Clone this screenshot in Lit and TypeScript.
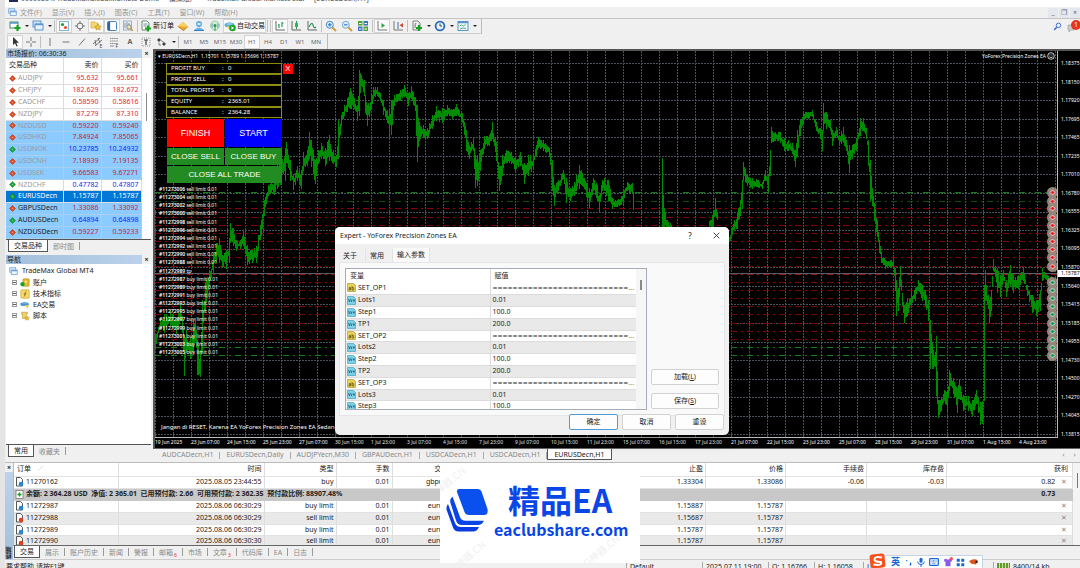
import { LitElement, html, svg, css } from "lit";
import { customElement, property } from "lit/decorators.js";
import { classMap } from "lit/directives/class-map.js";

const fontStack = css`"Noto Sans", "Noto Sans CJK SC", sans-serif`;

/* ---------- icons ---------- */
const ic = (body: unknown, w = 12, h = 12) => html`<svg class="ic" width=${w} height=${h} viewBox="0 0 12 12" aria-hidden="true">${body}</svg>`;
const plus = (x: number, y: number) => svg`<path d="M${x} ${y - 3}v6M${x - 3} ${y}h6" stroke="#14a321" stroke-width="2.2"/>`;
const icons = {
  newChart: svg`<rect x="1" y="2" width="8" height="6" fill="#fff" stroke="#4d8a5c"/><path d="M1 3h8" stroke="#4a8fd0" stroke-width="1.4"/>${plus(8.5, 8)}`,
  profiles: svg`<rect x="1" y="1" width="8" height="6" fill="#cfe4f8" stroke="#5c94cc"/><rect x="3" y="4" width="8" height="6" fill="#e8f2fc" stroke="#5c94cc"/><path d="M3 4.500h8" stroke="#5c94cc" stroke-width="1.5"/>`,
  market: svg`<rect x="1.5" y="1.5" width="9" height="9" fill="#fff" stroke="#7fb6dc"/><circle cx="4.5" cy="4.5" r="1.6" fill="#18a030"/><circle cx="7.5" cy="7.5" r="1.6" fill="#e0502a"/>`,
  target: svg`<circle cx="6" cy="6" r="3" fill="none" stroke="#777"/><path d="M6 1v3M6 8v3M1 6h3M8 6h3" stroke="#777"/>`,
  star: svg`<path d="M1 2h4l1 1h2v5H1z" fill="#f6d974" stroke="#d8a830" stroke-width=".7"/><path d="M8 4l1 2 2.400.3-1.700 1.500.4 2.200L8 9l-2 1 .3-2.200-1.600-1.500L7 6z" fill="#f3c63c" stroke="#b88a18" stroke-width=".6"/>`,
  terminal: svg`<rect x="1.500" y="1.500" width="9" height="9" rx="1" fill="#fff" stroke="#4a7fc0"/><path d="M3 2v8" stroke="#2e62a8" stroke-width="2.200"/>`,
  tester: svg`<rect x="1.500" y="1" width="8" height="9" fill="#e4ecf4" stroke="#8aa4be" stroke-width=".8"/><path d="M3 3v5M5 2v4M7 3v4" stroke="#89a"/><circle cx="7" cy="7" r="2.200" fill="#f7e5a8" stroke="#678" stroke-width=".8"/><path d="M8.600 8.600l2.200 2.200" stroke="#c99a34" stroke-width="1.500"/>`,
  order: svg`<path d="M2 1h5l2 2v7H2z" fill="#fff" stroke="#5d7f6a" stroke-width=".9"/><path d="M3.500 4h4M3.500 6h3" stroke="#789"/>${plus(8, 8.500)}`,
  gold: svg`<path d="M1 6l5-4 5 4.500-4.500 4z" fill="#e9ab25"/><path d="M1 6l5-4 5 4.500-3 .3z" fill="#f8d066"/><path d="M1 6v1l5.500 4 4.500-4V6.500L6.500 10z" fill="#b97d10"/>`,
  person: svg`<circle cx="6" cy="4" r="3" fill="#5fa8e6"/><path d="M1 10q5-5 10 0z" fill="#6cb0ea"/><path d="M1 10.500h10" stroke="#3a7cc0"/><path d="M4.500 3h3v2h-3z" fill="#dcefff"/>`,
  signal: svg`<circle cx="6" cy="5.500" r="4.500" fill="#d8eedd" stroke="#8cbf9b" stroke-width=".8"/><path d="M3.500 3.500q-1.500 2 0 4M8.500 3.500q1.500 2 0 4" fill="none" stroke="#4a90b8"/><circle cx="6" cy="5.500" r="1.500" fill="#2c9a3e"/><path d="M6 6v5" stroke="#2c9a3e"/>`,
  auto: svg`<ellipse cx="5.500" cy="5" rx="5" ry="2.500" fill="#5caede"/><path d="M3 4q2.500-4 5.500 0v1H3z" fill="#8ccbee"/><path d="M3 6h5l-2.500 4z" fill="#f0c649"/><circle cx="8.500" cy="8" r="3.300" fill="#16a52b"/><path d="M7.500 6.300v3.400l2.600-1.700z" fill="#fff"/>`,
  bars: svg`<path d="M2 1v9h9" fill="none" stroke="#666"/><path d="M5 4v4M8 2v5M4 5h1M8 3h1.500" stroke="#24984a" stroke-width="1.100"/>`,
  candles: svg`<path d="M2 1v9h9" fill="none" stroke="#666"/><path d="M6.500 1v8" stroke="#24984a"/><rect x="5" y="3" width="3" height="4" fill="#35b35d"/>`,
  line: svg`<path d="M2 1v9h9" fill="none" stroke="#666"/><path d="M3 7q3-6 4-2t3 2" fill="none" stroke="#24984a" stroke-width="1.100"/>`,
  zoomIn: svg`<circle cx="4.800" cy="4.800" r="3.500" fill="#d6ecfb" stroke="#4a8cc6"/><path d="M3 4.800h3.600M4.800 3v3.600" stroke="#2a6fb5"/><path d="M7.500 7.500l3.500 3.500" stroke="#cf9e34" stroke-width="2"/>`,
  zoomOut: svg`<circle cx="4.800" cy="4.800" r="3.500" fill="#d6ecfb" stroke="#7aa9d0"/><path d="M3 4.800h3.600" stroke="#2a6fb5"/><path d="M7.500 7.500l3.500 3.500" stroke="#cf9e34" stroke-width="2"/>`,
  tiles: svg`<path d="M1 1h4.500v4.500H1zM6.500 6.500H11V11H6.500z" fill="#4da33a"/><path d="M6.500 1H11v4.500H6.500zM1 6.500h4.500V11H1z" fill="#3f74b8"/><path d="M2 3.500h2.500M7.500 3.500H10M2 9h2.500M7.500 9H10" stroke="#fff"/>`,
  scroll: svg`<path d="M2 1v9h9" fill="none" stroke="#777"/><path d="M5.500 3v5l3.500-2.500z" fill="#28a745"/>`,
  shift: svg`<path d="M2 1v9h9" fill="none" stroke="#777"/><path d="M6 2v7" stroke="#3d6fb0"/><path d="M11 3v4.500L7.500 5.200z" fill="#d0472c"/>`,
  indicators: svg`<path d="M2 1h5l2 2v7H2z" fill="#eee" stroke="#777" stroke-width=".9"/><path d="M5 3q-1 0-1 5" fill="none" stroke="#777"/>${plus(8, 8)}`,
  clock: svg`<circle cx="6" cy="6" r="4.400" fill="#eaf4fd" stroke="#2a6cb8" stroke-width="1.800"/><path d="M6 3.500V6h2" fill="none" stroke="#345"/>`,
  template: svg`<rect x="1" y="1.500" width="10" height="9" fill="#eef6fd" stroke="#5b93c8"/><path d="M1 2.500h10" stroke="#5b93c8" stroke-width="1.500"/><path d="M2.500 6l2-1 2 1 2-1.500M3 9l3-1 3 .5" stroke="#3a9a58" fill="none" stroke-width=".8"/>`,
  cursor: svg`<path d="M4 1v8l2-1.800L7.500 10.500l1.200-.6L7.300 6.800H10z" fill="#333"/>`,
  cross: svg`<path d="M6 1v4M6 7v4M1 6h4M7 6h4" stroke="#777"/>`,
  vline: svg`<path d="M6 2v8" stroke="#777"/>`,
  hline: svg`<path d="M2.500 6h7" stroke="#777"/>`,
  slope: svg`<path d="M3 9.500l6-7" stroke="#777"/>`,
  channel: svg`<path d="M1 8l7-6M3 10l7-6M3 4l1 5M6 2l2 5" stroke="#666" stroke-width=".9"/><text x="7.500" y="11.500" font-size="5" fill="#444">E</text>`,
  fibo: svg`<path d="M2 2.500h8M2 5h8M2 7.500h8" stroke="#888" stroke-dasharray="1.500 .6"/><path d="M2 10h4" stroke="#888"/><text x="7.500" y="11.800" font-size="5" fill="#444">F</text>`,
  label: svg`<rect x="2" y="2" width="8" height="8" fill="none" stroke="#999" stroke-dasharray="1 1"/><path d="M4 4h4M6 4v5" stroke="#444" stroke-width="1.200"/>`,
  arrows: svg`<path d="M3 2l2 2-2 2-2-2z" fill="#444"/><path d="M8 6l2 2-2 2-2-2z" fill="#444"/><path d="M5 4.500l3 2M3 6.500v2.500h2" stroke="#666" fill="none" stroke-width=".8"/>`,
  search: svg`<circle cx="7.300" cy="4.500" r="3" fill="none" stroke="#3b6fd4" stroke-width="1.300"/><path d="M5 7L1.500 10.500" stroke="#3b6fd4" stroke-width="2"/>`,
  windows: svg`<rect x="1" y="1" width="8" height="6" fill="#dcecfb" stroke="#6a9fd4"/><rect x="3" y="4" width="8" height="6" fill="#eef6fd" stroke="#6a9fd4"/><path d="M3 5h8" stroke="#6a9fd4" stroke-width="1.500"/>`,
  account: svg`<rect x="3.500" y="1" width="7.500" height="9" rx="1" fill="#e8b92e" stroke="#a87c12" stroke-width=".6"/><path d="M7 3v3M5.500 4.500h3" stroke="#fff3b8"/><circle cx="3" cy="7.500" r="2.600" fill="#18a32c"/>`,
  func: svg`<rect x="1" y="1" width="10" height="10" rx="1" fill="#f6d968" stroke="#c8a02a" stroke-width=".8"/><path d="M7.500 3q-1.500 0-1.500 3t-1.500 3M4.500 6h3" stroke="#7a5c10" fill="none" stroke-width=".9"/>`,
  hat: svg`<ellipse cx="5.500" cy="5" rx="5.200" ry="2.200" fill="#4d97cc"/><path d="M3 4.500q2.500-5 5.500 0z" fill="#6fb3dd"/><path d="M6 6h4.500L9 10.500z" fill="#efc445"/>`,
  script: svg`<path d="M2 1.500h7v2H7.500V9H3V4H2z" fill="#f3d269" stroke="#b8912a" stroke-width=".7"/><path d="M8.500 6l1 1.500 2 .3-1.500 1.300.3 2-1.800-1-1.800 1 .3-2L5.500 7.800l2-.3z" fill="#f1c232" stroke="#a87c12" stroke-width=".4"/>`,
};
const arrowIcon = (up: boolean) => html`<svg class="dot" width="7" height="7" viewBox="0 0 7 7" aria-hidden="true"><path d="M3.500 .6L6.500 3.500 3.500 6.400 .5 3.500z" fill=${up ? "#18a53a" : "#e2491f"} stroke=${up ? "#0c7a26" : "#a8300e"} stroke-width=".5"/><circle cx="3.500" cy="3.500" r=".8" fill="#fff" fill-opacity=".4"/></svg>`;

const shared = css`
  :host { display: block; box-sizing: border-box; font-family: ${fontStack}; font-size: 7px; line-height: 10px; color: #222; }
  * { box-sizing: border-box; }
  button { font: inherit; color: inherit; border: 0; background: none; padding: 0; margin: 0; white-space: nowrap; }
  table { border-collapse: collapse; border-spacing: 0; table-layout: fixed; }
  td, th { padding: 0; font-weight: normal; white-space: nowrap; overflow: hidden; }
  .ic, .dot { display: block; flex: none; }
  .tabs { display: flex; align-items: flex-start; color: #8a8a8a; }
  .tab { padding: 1px 6px 0 5px; height: 12px; position: relative; }
  .tab:not(.on)::after { content: ""; position: absolute; right: 0; top: 2px; width: 1px; height: 8px; background: #999; }
  .tab.on { background: #fff; color: #222; border: 1px solid #555; border-top: 0; padding: 1px 5px 0; }
  .badge { color: #f02020; font-size: 5px; position: relative; top: 2px; margin-left: 1px; }
`;

/* ---------- toolbars ---------- */
@customElement("tool-bars")
export class ToolBars extends LitElement {
  static styles = [shared, css`
    .menu { display: flex; height: 12px; align-items: center; gap: 3px; padding-left: 3px; color: #999; border-bottom: 1px solid #c4c4c4; }
    .menu nav { display: flex; gap: 10px; flex: 1; }
    .win { display: flex; gap: 1px; }
    .win button { width: 10px; height: 10px; background: #e4e8ee; color: #667; line-height: 9px; }
    .row { display: flex; height: 15px; align-items: center; padding-left: 2px; }
    .group { display: flex; align-items: center; height: 15px; border-bottom: 1px solid #ccc; border-right: 1px solid #bbb; padding-right: 3px; }
    .second .group { border-bottom: 0; }
    .b { width: 16px; height: 14px; display: flex; align-items: center; justify-content: center; }
    .b.on { background: #fafafa; outline: 1px solid #d4d4d4; outline-offset: -1px; }
    .b.wide { width: auto; gap: 1px; padding: 0 1px; color: #111; }
    .caret { width: 7px; }
    .caret::before { content: ""; display: block; margin: 0 auto; width: 0; border: 2px solid transparent; border-top-color: #222; border-bottom: 0; }
    .sep { width: 1px; height: 12px; background: #c0c0c0; margin: 0 1px; }
    .tf { font-size: 6px; color: #666; }
    .letter { font-weight: bold; color: #666; }
    .fill { flex: 1; }
    .alert { position: relative; width: 13px; margin-left: 5px; height: 14px; }
    .alert b { position: absolute; right: -1px; top: 0; width: 10px; height: 10px; border-radius: 5px; background: #e8341c; color: #fff; font-weight: normal; text-align: center; line-height: 9px; }
  `];
  b(name: keyof typeof icons, on = false) {
    return html`<button class=${classMap({ b: true, on })} aria-label=${name}>${ic(icons[name])}</button>`;
  }
  render() {
    const caret = html`<span class="caret"></span>`;
    const sep = html`<span class="sep"></span>`;
    return html`
      <div class="menu">${ic(icons.windows, 9, 9)}
        <nav>${["文件(F)", "显示(V)", "插入(I)", "图表(C)", "工具(T)", "窗口(W)", "帮助(H)"].map((m) => html`<button>${m}</button>`)}</nav>
        <div class="win"><button>_</button><button>❐</button><button>×</button></div>
      </div>
      <div class="row">
        <div class="group">
          ${this.b("newChart")}${caret}${this.b("profiles")}${caret}${sep}
          ${this.b("market", true)}${this.b("target")}${this.b("star", true)}${this.b("terminal", true)}${this.b("tester")}${sep}
          <button class="b wide">${ic(icons.order)}新订单</button>
          ${this.b("gold")}${this.b("person")}${this.b("signal")}
          <button class="b wide on">${ic(icons.auto)}自动交易</button>
          ${sep}${sep}${this.b("bars", true)}${this.b("candles")}${this.b("line")}${sep}
          ${this.b("zoomIn")}${this.b("zoomOut")}${this.b("tiles")}${sep}${this.b("scroll", true)}${this.b("shift")}${sep}
          ${this.b("indicators")}${caret}${this.b("clock")}${caret}${this.b("template")}${caret}
        </div>
        <span class="fill"></span>
        ${ic(icons.search, 9, 9)}
        <div class="alert">${ic(svg`<path d="M1 5h6v5H4l-2 2v-2H1z" fill="#ccc" stroke="#999" stroke-width=".6"/>`)}<b>1</b></div>
      </div>
      <div class="row second">
        <div class="group">
          ${this.b("cursor", true)}${this.b("cross")}${sep}
          ${this.b("vline")}${this.b("hline")}${this.b("slope")}${this.b("channel")}${this.b("fibo")}
          <button class="b letter">A</button>${this.b("label")}${this.b("arrows")}${caret}${sep}
          ${["M1", "M5", "M15", "M30", "H1", "H4", "D1", "W1", "MN"].map((t) => html`<button class=${classMap({ b: true, tf: true, on: t === "H1" })}>${t}</button>`)}
        </div>
      </div>`;
  }
}

/* ---------- left column ---------- */
type Quote = [string, string, string, boolean, string];
const quotes: Quote[] = [
  ["AUDJPY", "95.632", "95.661", false, "r"],
  ["CHFJPY", "182.629", "182.672", false, "r"],
  ["CADCHF", "0.58590", "0.58616", false, "r"],
  ["NZDJPY", "87.279", "87.310", false, "r"],
  ["NZDUSD", "0.59220", "0.59240", false, "r hi"],
  ["USDHKD", "7.84924", "7.85065", false, "r hi"],
  ["USDNOK", "10.23785", "10.24932", true, "u hi"],
  ["USDCNH", "7.18939", "7.19135", false, "r hi"],
  ["USDSEK", "9.66583", "9.67271", false, "r hi"],
  ["NZDCHF", "0.47782", "0.47807", true, "u"],
  ["EURUSDecn", "1.15787", "1.15787", true, "sel"],
  ["GBPUSDecn", "1.33086", "1.33092", false, "r hi own"],
  ["AUDUSDecn", "0.64894", "0.64898", true, "u hi own"],
  ["NZDUSDecn", "0.59227", "0.59233", false, "r hi own"],
];

@customElement("side-panels")
export class SidePanels extends LitElement {
  static styles = [shared, css`
    :host { display: flex; flex-direction: column; width: 145px; }
    .head { display: flex; align-items: center; height: 9px; background: linear-gradient(90deg, #a3bfdb, #bcd3ec); line-height: 9px; flex: none; }
    .head h2 { margin: 0; font: inherit; flex: 1; padding-left: 1px; }
    .head button { width: 9px; height: 9px; background: #f0f0f0; font-weight: bold; line-height: 8px; }
    .body { display: flex; background: #fff; height: 181px; overflow: hidden; }
    table { width: 135px; flex: none; }
    tr { height: 12px; }
    tbody tr:nth-child(5n) { height: 11px; }
    thead tr { height: 14px; }
    td, th { text-align: right; border-bottom: 1px solid #dcdcdc; border-right: 1px solid #dcdcdc; padding-right: 2px; line-height: 10px; }
    td:first-child, th:first-child { text-align: left; padding-left: 3px; }
    .sym { display: flex; align-items: center; gap: 2px; color: #9a9a9a; }
    .r { color: #f02030; }
    .u { color: #1a1aff; }
    .hi { background: #8ccbff; }
    .hi td { border-color: #a8cfee; }
    .hi.r { color: #c8203c; }
    .own .sym { color: #222; }
    .sel, .sel .sym { background: #0078d7; color: #fff; }
    .thumb { width: 1px; height: 28px; background: #888; margin: 35px 0 0 4px; }
    .strip { height: 16px; border-top: 1px solid #555; padding-left: 2px; flex: none; }
    .tree { flex: 1; background: #fff; margin: 0; padding: 1px 0 0 3px; list-style: none; }
    .tree li { display: flex; align-items: center; gap: 3px; height: 11px; padding-left: 2px; }
    .tree li.top { padding: 0; gap: 4px; height: 12px; }
    .exp { width: 5px; height: 5px; border: 1px solid #999; background: linear-gradient(#567, #567) center/3px 1px no-repeat; margin-left: 1px; }
    .low { height: 14px; }
  `];
  render() {
    return html`
      <div class="head"><h2>市场报价: 06:30:36</h2><button aria-label="close">×</button></div>
      <div class="body">
        <table>
          <colgroup><col width="57"><col width="38"><col width="40"></colgroup>
          <thead><tr><th>交易品种</th><th>卖价</th><th>买价</th></tr></thead>
          <tbody>${quotes.map(([s, bid, ask, up, cls]) => html`<tr class=${cls}><td><div class="sym">${arrowIcon(up)}${s}</div></td><td>${bid}</td><td>${ask}</td></tr>`)}</tbody>
        </table>
        <div class="thumb"></div>
      </div>
      <div class="strip tabs"><button class="tab on">交易品种</button><button class="tab">即时图</button></div>
      <div class="head"><h2>导航</h2><button aria-label="close">×</button></div>
      <ul class="tree">
        <li class="top">${ic(icons.windows, 9, 9)}TradeMax Global MT4</li>
        ${([["account", "账户"], ["func", "技术指标"], ["hat", "EA交易"], ["script", "脚本"]] as const).map(([i, t]) => html`<li><span class="exp"></span>${ic(icons[i], 10, 10)}${t}</li>`)}
      </ul>
      <div class="strip low tabs"><button class="tab on">常用</button><button class="tab">收藏夹</button></div>`;
  }
}

/* ---------- chart ---------- */
/* price envelope: x, high edge, low edge */
const env: number[][][] = [
  [[155,335,349],[160,320,326],[164,314,332],[170,310,325],[176,318,333],[180,303,320],[182,316,332],[184,335,375],[186,330,352],[190,338,358],[193,322,352],[195,318,340],[197,340,374],[200,350,376],[202,300,352],[205,282,310],[209,271,284],[213,256,272],[216,243,262],[219,238,262],[222,255,266],[226,250,268],[229,238,262],[230,223,242],[233,228,245],[236,240,250],[240,240,248],[243,230,245],[247,245,264],[252,250,262],[256,246,262],[258,235,250],[261,220,235],[264,200,215],[268,185,195],[271,183,192],[274,183,194],[277,160,188],[281,160,183],[285,148,180],[286,142,162],[290,160,180],[293,175,189],[297,166,180],[301,170,188],[303,152,170],[307,150,165],[309,132,158],[311,140,166],[315,160,183],[318,150,163],[321,143,158],[325,148,165],[329,135,160],[333,150,163],[336,155,166],[338,120,158],[341,115,125],[344,105,115],[350,88,108],[354,98,108],[357,105,120],[359,70,115],[361,75,85],[364,80,95],[365,95,112],[367,105,125],[371,95,108],[373,87,98],[377,87,95],[380,93,100],[383,100,114],[387,110,122],[389,108,136],[391,100,134],[394,95,105],[400,90,100],[404,85,96],[408,93,105],[411,86,98],[415,97,110],[416,105,135],[417,105,161],[419,122,140],[423,125,137],[427,128,138],[432,115,128],[436,106,120],[442,108,122],[447,105,115],[452,110,118],[456,104,115],[462,113,122],[466,130,150],[469,145,158],[473,138,150],[475,155,187],[477,155,185],[480,150,170],[484,136,148],[489,135,145],[492,122,138],[496,142,160],[499,166,190],[502,155,175],[506,150,162],[511,152,163],[515,158,172],[520,152,165],[524,163,183],[528,155,175],[533,155,168],[536,145,155],[538,137,147],[543,140,150],[549,148,155],[552,160,190],[554,185,205],[558,180,190],[563,170,178],[566,178,202],[570,188,200],[574,182,195],[579,165,188],[584,178,188],[587,185,200],[589,188,207],[593,178,190],[597,185,200],[599,195,212],[602,180,190],[604,178,190],[608,180,200],[612,198,208],[617,200,206],[623,190,203],[627,182,190],[632,183,193],[634,200,228]],
  [[662,158,228],[663,195,228],[664,208,228],[668,222,228],[672,223,228]],
  [[709,221,228],[713,212,228],[715,198,215],[718,215,228]],
  [[728,238,246],[731,230,238],[734,220,230],[737,212,228],[740,200,215],[742,180,208],[743,162,180],[747,175,185],[752,178,188],[758,180,187],[762,182,188],[765,170,180],[768,175,192],[770,150,175],[771,127,142],[775,132,140],[780,132,142],[784,138,150],[788,140,150],[792,143,153],[795,150,166],[797,130,155],[800,120,135],[803,112,122],[808,112,118],[812,110,116],[816,122,130],[820,128,138],[822,130,150],[823,103,130],[826,112,128],[830,120,130],[832,130,145],[836,127,135],[839,135,145],[843,127,142],[846,140,150],[849,145,172],[852,145,158],[856,138,150],[860,118,135],[863,118,130],[866,128,138],[868,140,165],[870,160,200],[872,188,205],[874,203,220],[877,220,236],[879,240,252],[881,252,262],[885,260,268],[890,260,267],[893,258,268],[895,268,290],[896,280,315],[898,288,310],[900,266,285],[902,293,305],[904,305,322],[907,298,315],[911,293,305],[915,288,300],[918,280,290],[922,285,300],[925,290,305],[928,300,320],[930,320,368],[933,350,368],[935,352,366],[936,336,395],[938,400,417],[941,398,410],[944,390,400],[947,392,412],[949,370,390],[953,378,393],[957,388,412],[959,380,398],[963,395,410],[968,396,410],[972,400,415],[976,390,403],[980,402,424],[983,398,426]],
  [[984,285,400],[985,270,300],[986,285,300],[989,300,322],[991,290,310],[993,259,270],[997,268,292],[1000,275,296],[1003,270,280],[1006,280,296],[1010,265,285],[1013,275,292],[1018,275,288],[1023,268,280],[1027,285,295],[1032,295,312],[1036,300,315],[1040,290,310],[1042,268,280],[1047,275,282],[1052,275,288]],
];
function bars(): string {
  let d = "";
  let s = 7;
  const rnd = () => ((s = (s * 16807) % 2147483647) / 2147483647);
  for (const seg of env) {
    for (let i = 0; i < seg.length - 1; i++) {
      const [x0, h0, l0] = seg[i];
      const [x1, h1, l1] = seg[i + 1];
      for (let x = x0; x < x1; x++) {
        const t = (x - x0) / (x1 - x0);
        const h = h0 + (h1 - h0) * t;
        const l = l0 + (l1 - l0) * t;
        const k = x === x0 ? 0 : (l - h) * 0.42;
        d += `M${x + 0.5} ${Math.round(h + rnd() * k)}V${Math.round(l - rnd() * k) + 1}`;
      }
    }
  }
  return d;
}
const barPath = bars();
const orders = ["#11273006 sell limit 0.01", "#11273004 sell limit 0.01", "#11273002 sell limit 0.01", "#11273000 sell limit 0.01", "#11272998 sell limit 0.01", "#11272996 sell limit 0.01", "#11272994 sell limit 0.01", "#11272992 sell limit 0.01", "#11272990 sell limit 0.01", "#11272988 sell limit 0.01", "#11272989 tp", "#11272987 buy limit 0.01", "#11272989 buy limit 0.01", "#11272991 buy limit 0.01", "#11272993 buy limit 0.01", "#11272995 buy limit 0.01", "#11272997 buy limit 0.01", "#11272999 buy limit 0.01", "#11273001 buy limit 0.01", "#11273003 buy limit 0.01", "#11273005 buy limit 0.01"];
const prices = ["1.18375", "1.18150", "1.17920", "1.17695", "1.17465", "1.17235", "1.17010", "1.16780", "1.16555", "1.16325", "1.16095", "1.15870", "1.15640", "1.15415", "1.15185", "1.14955", "1.14730", "1.14500", "1.14270", "1.14045", "1.13815"];
const times = ["19 Jun 2025", "23 Jun 07:00", "24 Jun 15:00", "25 Jun 23:00", "27 Jun 07:00", "30 Jun 15:00", "1 Jul 23:00", "3 Jul 07:00", "4 Jul 15:00", "7 Jul 23:00", "9 Jul 07:00", "10 Jul 15:00", "11 Jul 23:00", "15 Jul 07:00", "16 Jul 15:00", "17 Jul 23:00", "21 Jul 07:00", "22 Jul 15:00", "23 Jul 23:00", "25 Jul 07:00", "28 Jul 15:00", "29 Jul 23:00", "31 Jul 07:00", "1 Aug 15:00", "4 Aug 23:00"];
const levels = [192, 201, 208, 217, 225, 233, 241, 249, 257, 266, 274, 282, 290, 298, 306, 314, 323, 331, 339, 347, 355];
const levelColor = (i: number) => {
  if (i === 10) return "#a01010";
  if (i === 1) return "#0a500a";
  if (i === 0 || i > 18) return "#128212";
  return "#8c0000";
};

@customElement("price-chart")
export class PriceChart extends LitElement {
  static styles = [shared, css`
    :host { position: relative; background: #000; color: #fff; display: flex; flex-direction: column; border: 2px solid #555; border-right: 0; border-bottom: 1px solid #666; font-size: 5px; line-height: 6px; }
    .main { display: flex; flex: 1; min-height: 0; }
    .plot { position: relative; flex: 1; border-right: 1px solid #bbb; border-bottom: 1px solid #bbb; overflow: hidden; }
    .plot svg.c { display: block; width: 100%; height: 100%; }
    .axis { width: 22px; padding: 9px 0 0 3px; display: flex; flex-direction: column; justify-content: space-between; height: 386px; position: relative; }
    .now { position: absolute; left: 0; right: 0; top: 219px; background: #fff; color: #000; padding-left: 3px; height: 7px; line-height: 7px; }
    .time { display: flex; height: 10px; overflow: hidden; line-height: 9px; }
    .time span { width: 36px; flex: none; white-space: nowrap; }
    .title { position: absolute; left: 3px; top: 2px; white-space: pre; }
    .ea { position: absolute; right: 2px; top: 1px; display: flex; align-items: center; gap: 1px; }
    .note { position: absolute; left: 6px; bottom: 6px; font-size: 6px; line-height: 8px; white-space: nowrap; }
    .panel { position: absolute; left: 11px; top: 12px; width: 116px; font-size: 6px; line-height: 9px; }
    .stats { margin: 0; padding-bottom: 1px; }
    .stat { display: grid; grid-template-columns: 51px 6px 1fr; border: 1px solid #8c8c14; padding-left: 4px; height: 11px; background: #000; }
    .stat dt, .stat dd { margin: 0; }
    .btns { display: grid; grid-template-columns: 1fr 1fr; gap: 1px; font: 8px/16px "Liberation Sans", sans-serif; color: #fff; padding-left: 1px; }
    .btns button { background: #228b22; height: 17px; }
    .btns .big { height: 28px; font-size: 9px; background: #f00; }
    .btns .blue { background: #00f; }
    .btns .all { grid-column: span 2; }
    .x { position: absolute; left: 117px; top: 1px; width: 10px; height: 10px; background: #f00; color: #fff; font: 8px/10px "Liberation Sans", sans-serif; }
  `];
  render() {
    const grid = Array.from({ length: 21 }, (_, i) => Math.round(63 + i * 18.57));
    return html`
      <div class="main">
        <div class="plot">
          <svg class="c" role="img" aria-label="EURUSDecn H1">
            <g transform="translate(-155 -51)" shape-rendering="crispEdges">
              <g stroke="#4a535d" stroke-dasharray="2 1">
                ${Array.from({ length: 70 }, (_, i) => svg`<path d=${`M${155.5 + i * 18} 51V437`}/>`)}
                ${grid.map((y) => svg`<path d=${`M155 ${y + 0.5}H2400`}/>`)}
              </g>
              <path d="M155 273.500H2400" stroke="#56606a"/>
              ${levels.map((y, i) => svg`<path d=${`M155 ${y + 0.5}H2400`} stroke=${levelColor(i)} stroke-dasharray="6 4 2 4"/>`)}
              <path d=${barPath} stroke="#008c00"/>
            </g>
            <g transform="translate(-155 -51)">
              ${levels.filter((_, i) => i !== 10).map((y, i) => svg`<circle cx="1052.500" cy=${y + 0.5} r="5.500" fill="#96877c"/><path d=${`M1047 ${y + 0.5}h11`} stroke="#6a6ad0" stroke-width=".6"/><path d=${`M1052.500 ${y - 2}l2.500 2.500-2.500 2.500-2.500-2.500z`} fill=${i < 10 ? "#e22" : "#1a9a50"} stroke="#fff" stroke-width=".7"/>`)}
              <g fill="#fff" font-size="5">${orders.map((o, i) => svg`<text x="159" y=${Math.round(191 + i * 8.15)}><tspan font-weight="600">${o.slice(0, 9)}</tspan>${o.slice(9)}</text>`)}</g>
            </g>
          </svg>
          <div class="title">▾ EURUSDecn,H1  1.15701 1.15789 1.15696 1.15787</div>
          <div class="ea">YoForex Precision Zones EA <svg width="8" height="8" viewBox="0 0 8 8"><circle cx="4" cy="4" r="3.300" fill="none" stroke="#fff" stroke-width=".8"/><path d="M2.500 3h1M4.500 3h1M2.300 4.800q1.700 1.600 3.400 0" stroke="#fff" stroke-width=".8" fill="none"/></svg></div>
          <div class="note">Jangan di RESET, Karena EA YoForex Precision Zones EA Sedang</div>
          <div class="panel">
            <dl class="stats">${[["PROFIT BUY", "0"], ["PROFIT SELL", "0"], ["TOTAL PROFITS", "0"], ["EQUITY", "2365.01"], ["BALANCE", "2364.28"]].map(([k, v]) => html`<div class="stat"><dt>${k}</dt><span>:</span><dd>${v}</dd></div>`)}</dl>
            <div class="btns">
              <button class="big">FINISH</button><button class="big blue">START</button>
              <button>CLOSE SELL</button><button>CLOSE BUY</button>
              <button class="all">CLOSE ALL TRADE</button>
            </div>
            <button class="x">X</button>
          </div>
        </div>
        <div class="axis">${prices.map((p) => html`<span>${p}</span>`)}<div class="now">1.15787</div></div>
      </div>
      <div class="time">${times.map((t) => html`<span>${t}</span>`)}</div>`;
  }
}

/* ---------- dialog ---------- */
@customElement("expert-dialog")
export class ExpertDialog extends LitElement {
  static styles = [shared, css`
    :host { display: flex; flex-direction: column; background: #f0f0f0; border-radius: 5px; overflow: hidden; box-shadow: 0 4px 14px rgba(0, 0, 0, .35); }
    header { display: flex; align-items: center; height: 17px; background: #fff; padding: 0 8px 0 5px; flex: none; }
    h1 { font: inherit; margin: 0; flex: 1; }
    header button { width: 10px; margin-left: 16px; font-size: 8px; display: flex; justify-content: center; }
    .dtabs { display: flex; align-items: flex-end; padding: 4px 0 0 4px; height: 18px; flex: none; }
    .dtab { height: 13px; padding: 0 8px 0 4px; border-right: 1px solid #e2e2e2; }
    .dtab.on { height: 14px; background: #f9f9f9; padding: 0 4px; }
    .pane { margin: 0 4px; border: 1px solid #e6e6e6; background: #f9f9f9; display: flex; height: 154px; padding: 5px; justify-content: space-between; flex: none; }
    .list { display: flex; border: 1px solid #a5acb5; background: #fff; width: 302px; overflow: hidden; }
    table { width: 290px; flex: none; }
    tr { height: 12px; }
    tbody tr:nth-child(5n) { height: 11px; }
    tbody tr:nth-child(even) { background: #e9e9e9; }
    thead tr { height: 13px; }
    td, th { text-align: left; border-bottom: 1px solid #dcdcdc; padding-left: 2px; }
    th { padding-left: 4px; border-bottom: 0; }
    td:first-child, th:first-child { border-right: 1px solid #dcdcdc; }
    td:last-child { text-overflow: ellipsis; }
    td:first-child { padding-left: 1px; }
    .rule { font: 6px/10px "DejaVu Sans", sans-serif; }
    .nm { display: flex; align-items: center; gap: 2px; }
    .bar { flex: 1; background: #f6f6f6; }
    .bar::before { content: ""; display: block; width: 2px; height: 10px; background: #8a8a8a; margin: 11px 0 0 4px; }
    .side { display: flex; flex-direction: column; justify-content: flex-end; gap: 8px; padding-bottom: 1px; }
    .btn { width: 49px; height: 16px; background: #fdfdfd; border: 1px solid #d2d2d2; border-radius: 2px; }
    .side .btn { width: 68px; }
    .btn.def { border-color: #4f9bd8; }
    footer { display: flex; justify-content: flex-end; gap: 4px; padding-right: 5px; margin-top: -2px; position: relative; }
    u { text-decoration-thickness: 1px; }
  `];
  render() {
    const eq = "=".repeat(40);
    const rows: [string, string][] = [["SET_OP1", eq], ["Lots1", "0.01"], ["Step1", "100.0"], ["TP1", "200.0"], ["SET_OP2", eq], ["Lots2", "0.01"], ["Step2", "100.0"], ["TP2", "200.0"], ["SET_OP3", eq], ["Lots3", "0.01"], ["Step3", "100.0"]];
    const kind = (text: boolean) => html`<svg class="ic" width="9" height="9" viewBox="0 0 9 9" aria-hidden="true"><path d="M.5.5h6l2 2v6h-8z" fill=${text ? "#e6d15c" : "#7fd0e6"} stroke=${text ? "#b09a28" : "#3aa3c0"} stroke-width=".7"/>${text
      ? svg`<path d="M2 4.500h1.500v2.500H2V5.700h1.500M5 3v4h1.700V4.700H5" fill="none" stroke="#5c4c08" stroke-width=".7"/>`
      : svg`<path d="M1.500 3l1 3 1-3M4.500 6V4l1 0M7 3v3M6 4.500h1.500" fill="none" stroke="#0c5c78" stroke-width=".7"/>`}</svg>`;
    return html`
      <header><h1>Expert - YoForex Precision Zones EA</h1><button aria-label="help">?</button><button aria-label="close"><svg width="7" height="7" viewBox="0 0 7 7"><path d="M.7.7l5.600 5.600M6.300.7L.7 6.300" stroke="#333" stroke-width=".9"/></svg></button></header>
      <div class="dtabs"><button class="dtab">关于</button><button class="dtab">常用</button><button class="dtab on">输入参数</button></div>
      <div class="pane">
        <div class="list">
          <table>
            <colgroup><col width="144"><col></colgroup>
            <thead><tr><th>变量</th><th>赋值</th></tr></thead>
            <tbody>${rows.map(([k, v]) => html`<tr><td><div class="nm">${kind(k.startsWith("SET"))}${k}</div></td><td class=${v === eq ? "rule" : ""}>${v}</td></tr>`)}</tbody>
          </table>
          <div class="bar"></div>
        </div>
        <div class="side"><button class="btn">加载(<u>L</u>)</button><button class="btn">保存(<u>S</u>)</button></div>
      </div>
      <footer><button class="btn def">确定</button><button class="btn">取消</button><button class="btn">重设</button></footer>`;
  }
}

/* ---------- terminal ---------- */
@customElement("order-terminal")
export class OrderTerminal extends LitElement {
  static styles = [shared, css`
    :host { display: flex; }
    .edge { width: 8px; display: flex; flex-direction: column; flex: none; }
    .edge button { height: 9px; font-weight: bold; line-height: 8px; }
    .edge h2 { margin: 0; flex: 1; font: inherit; font-size: 6px; line-height: 8px; background: linear-gradient(#a3bfdb, #bcd3ec); writing-mode: vertical-rl; transform: rotate(180deg); font-weight: bold; }
    .col { flex: 1; min-width: 0; }
    .grid { height: 83px; overflow: hidden; background: #fff; display: flex; border-bottom: 1px solid #666; border-left: 1px solid #bbb; }
    table { flex: 1; }
    tr { height: 12px; }
    tbody tr:nth-child(5n) { height: 11px; }
    thead tr { height: 13px; }
    td, th { text-align: right; border-right: 1px solid #dedede; border-bottom: 1px solid #e2e2e2; padding-right: 2px; }
    td:first-child, th:first-child { text-align: left; padding-left: 1px; }
    th:first-child { padding-left: 3px; }
    .odd { background: #e9e9e9; }
    .total td { background: #c8c8c8; font-weight: bold; border-color: #c8c8c8; }
    .id { display: flex; align-items: center; gap: 2px; white-space: pre; }
    .x { color: #888; display: inline-block; width: 13px; text-align: center; }
    th:last-child { padding-right: 4px; }
    .sort { color: #999; margin-left: 6px; font-size: 6px; }
    .rail { width: 7px; background: #f4f4f4; }
    .rail::before { content: ""; display: block; width: 1px; height: 15px; background: #777; margin: 10px 0 0 4px; }
    .tabs { padding-left: 1px; }
  `];
  doc(color: string) {
    return html`<svg class="ic" width="9" height="10" viewBox="0 0 9 10" aria-hidden="true"><path d="M1.500.5h4l2 2v6.500h-6z" fill="#fff" stroke="#444" stroke-width=".9"/><circle cx="6" cy="7" r="2.300" fill=${color}/></svg>`;
  }
  render() {
    const rows: [string, string, string, string, string][] = [
      ["11272987", "2025.08.06 06:30:29", "buy limit", "1.15887", "1.15787"],
      ["11272988", "2025.08.06 06:30:29", "sell limit", "1.15687", "1.15787"],
      ["11272989", "2025.08.06 06:30:29", "buy limit", "1.15787", "1.15787"],
      ["11272990", "2025.08.06 06:30:30", "sell limit", "1.15787", "1.15787"],
    ];
    const x = html`<span class="x">✕</span>`;
    return html`
      <div class="edge"><button aria-label="close">×</button><h2>终端</h2></div>
      <div class="col">
        <div class="grid">
          <table>
            <colgroup><col width="104"><col width="146"><col width="72"><col width="56"><col width="73"><col><col width="80"><col width="80"><col width="81"><col width="80"><col width="126"></colgroup>
            <thead><tr><th>订单<span class="sort">∕</span></th><th>时间</th><th>类型</th><th>手数</th><th>交易品种</th><th></th><th>止盈</th><th>价格</th><th>手续费</th><th>库存费</th><th>获利</th></tr></thead>
            <tbody>
              <tr><td><div class="id">${this.doc("#2a86d8")}11270162</div></td><td>2025.08.05 23:44:55</td><td>buy</td><td>0.01</td><td>gbpusdecn</td><td></td><td>1.33304</td><td>1.33086</td><td>-0.06</td><td>-0.03</td><td>0.82 ${x}</td></tr>
              <tr class="total"><td colspan="10"><div class="id"><svg class="ic" width="9" height="9" viewBox="0 0 9 9"><rect x="1" y=".5" width="7" height="8" fill="#fff" stroke="#777" stroke-width=".8"/><path d="M4.500 2.500v4M2.500 4.500h4" stroke="#14a321" stroke-width="1.600"/></svg>余额: 2 364.28 USD  净值: 2 365.01  已用预付款: 2.66  可用预付款: 2 362.35  预付款比例: 88907.48%</div></td><td>0.73 <span class="x"></span></td></tr>
              ${rows.map(([id, t, type, tp, price], i) => html`<tr class=${i % 2 ? "odd" : ""}><td><div class="id">${this.doc(i % 2 ? "#e0401c" : "#2a86d8")}${id}</div></td><td>${t}</td><td>${type}</td><td>0.01</td><td>eurusdecn</td><td></td><td>${tp}</td><td>${price}</td><td></td><td></td><td>${x}</td></tr>`)}
            </tbody>
          </table>
          <div class="rail"></div>
        </div>
        <div class="tabs">
          ${[["交易"], ["展示"], ["账户历史"], ["新闻"], ["警报"], ["邮箱", "6"], ["市场"], ["文章", "3"], ["代码库"], ["EA"], ["日志"]].map(([t, n], i) => html`<button class=${classMap({ tab: true, on: i === 0 })}>${t}${n ? html`<span class="badge">${n}</span>` : ""}</button>`)}
        </div>
      </div>`;
  }
}

/* ---------- page ---------- */
@customElement("app-root")
export class AppRoot extends LitElement {
  @property({ type: String }) active = "EURUSDecn,H1";
  static styles = [shared, css`
    :host { display: flex; flex-direction: column; position: relative; height: 100vh; overflow: hidden; background: #f0f0f0; border-left: 5px solid #e4e4e4; }
    .caption { height: 7px; background: #fff; display: flex; align-items: flex-end; gap: 3px; padding: 0 0 3px 4px; overflow: hidden; flex: none; color: #444; }
    .caption span { white-space: pre; }
    .caption i { width: 9px; height: 9px; background: #1c2a5c; margin-bottom: 2px; }
    tool-bars { flex: none; }
    .mid { display: flex; gap: 2px; flex: none; padding-left: 1px; height: 409px; }
    .right { flex: 1; min-width: 0; display: flex; flex-direction: column; }
    price-chart { flex: none; height: 400px; }
    .ctabs { display: flex; color: #888; padding-left: 3px; height: 11px; position: relative; }
    .ctabs button { padding: 0 7px 0 6px; line-height: 11px; position: relative; }
    .ctabs button:not(.on)::after { content: ""; position: absolute; right: 0; top: 3px; height: 7px; width: 1px; background: #aaa; }
    .ctabs .on { background: #fff; color: #222; border: 1px solid #555; border-top: 0; padding: 0 6px; }
    .ctabs .nav { margin-left: auto; padding: 0; width: 22px; display: flex; justify-content: space-around; }
    .ctabs .nav::after { display: none; }
    order-terminal { flex: none; margin-top: 4px; height: 97px; border-top: 1px solid #bbb; }
    .status { display: flex; border-top: 1px solid #ccc; padding-top: 2px; flex: none; }
    .status > span { padding-left: 3px; border-left: 1px solid #aaa; white-space: nowrap; }
    .status > span:first-child { flex: 1; border: 0; padding-left: 1px; }
    .s1 { width: 76px; } .s2 { width: 66px; } .s3 { width: 46px; } .s4 { width: 49px; } .s5 { width: 130px; } .s6 { width: 87px; display: flex; gap: 3px; align-items: center; }
    .meter { width: 13px; height: 8px; background: repeating-linear-gradient(90deg, #5f9a2c 0 2px, #cfe0a8 2px 3px); }
    expert-dialog { position: absolute; left: 330px; top: 227px; width: 394px; height: 208px; }
    .logo { position: absolute; left: 435px; top: 463px; width: 200px; height: 100px; background: #fff; color: #0a46e6; font-family: "Noto Sans CJK SC", sans-serif; font-weight: bold; overflow: hidden; }
    .logo .mark { position: absolute; left: 1px; top: 24px; }
    .logo .name { position: absolute; left: 68px; top: 16px; font-size: 32px; line-height: 40px; white-space: nowrap; }
    .logo .site { position: absolute; left: 54px; top: 55px; font-size: 16px; line-height: 22px; }
    .wm { position: absolute; font-size: 10px; line-height: 12px; color: #f0f0f0; font-weight: normal; transform: rotate(-40deg); white-space: nowrap; }
    .wm1 { left: -32px; top: 20px; } .wm2 { left: -12px; top: 94px; } .wm3 { left: 122px; top: 88px; }
    .ime { position: absolute; right: 97px; bottom: -3px; height: 16px; width: 113px; background: #fff; border: 1px solid #c8d4e4; display: flex; align-items: center; justify-content: space-between; padding: 0 3px 2px 20px; color: #1668d8; font-weight: bold; font-size: 9px; }
    .ime .s { position: absolute; left: -2px; top: -3px; }
  `];
  render() {
    const charts = ["AUDCADecn,H1", "EURUSDecn,Daily", "AUDJPYecn,M30", "GBPAUDecn,H1", "USDCADecn,H1", "USDCADecn,H1", "EURUSDecn,H1"];
    return html`
      <div class="caption"><i></i><span>90009534: TradeMaxGlobalMarkets-Demo  -  模拟账户  -  TradeMax Global Markets Ltd.  -  [EURUSDecn,H1]</span></div>
      <tool-bars></tool-bars>
      <div class="mid">
        <side-panels></side-panels>
        <div class="right">
          <price-chart></price-chart>
          <div class="ctabs">${charts.map((c) => html`<button class=${c === this.active ? "on" : ""}>${c}</button>`)}<button class="nav"><span>‹</span><span>›</span></button></div>
        </div>
      </div>
      <order-terminal></order-terminal>
      <div class="status"><span>要求帮助,请按F1键</span><span class="s1">Default</span><span class="s2">2025.07.11 19:00</span><span class="s3">O: 1.16766</span><span class="s4">H: 1.16058</span><span class="s5">L: 1.15</span><span class="s6"><i class="meter"></i>8400/14 kb</span></div>
      <expert-dialog></expert-dialog>
      <div class="logo">
        <span class="wm wm1">LOGO神器.CN</span><span class="wm wm2">LOGO神器.CN</span><span class="wm wm3">LOGO神器.CN</span>
        <svg class="mark" width="52" height="48" viewBox="0 0 52 48" aria-hidden="true"><path d="M18 2h19q2.500 0 3.500 2.500L46.500 22q1 6-3.500 6H28q-3.500 0-4.500-3L16 5q-.5-3 2-3z" fill="#0a50ee"/><path d="M11.500 9.500L19 30q1.300 3.800 5.500 3.800H43q-2 4.200-6 4.200H21q-4.500 0-6-4.500L9.500 16q-1-4 2-6.500z" fill="#0a46e6"/><path d="M7 17l7 19q1.500 4 6 4h18q-2 4.500-6 4.500H17.500q-4 0-5.500-4L6 24q-1.500-4 1-7z" fill="#0a3ce0"/></svg>
        <div class="name">精品EA</div><div class="site">eaclubshare.com</div>
      </div>
      <div class="ime">
        <svg class="s" width="18" height="17" viewBox="0 0 18 17" aria-hidden="true"><rect x="1" y="1" width="15" height="14" rx="3" fill="#f4511e" transform="rotate(-6 9 8)"/><path d="M13 4.500Q6 3 5.500 6t6.500 3q1.500 4-7.500 2.500" fill="none" stroke="#fff" stroke-width="2"/></svg>
        <span>英</span>
        ${ic(svg`<path d="M3 3.500h1.500M8 7q2 0 0 3" stroke="#1668d8" stroke-width="1.800" fill="none"/>`, 9, 9)}
        ${ic(svg`<rect x="4.200" y="1" width="3.600" height="6" rx="1.800" fill="#1668d8"/><path d="M2 5.500q0 3.500 4 3.500t4-3.500M6 9v3" stroke="#1668d8" fill="none" stroke-width="1.200"/>`, 10, 10)}
        ${ic(svg`<rect x=".8" y="2" width="10.400" height="8" rx="1" fill="none" stroke="#1668d8" stroke-width="1.500"/><path d="M3 4.500h6M3 6h6M4 8h4" stroke="#1668d8" stroke-dasharray="1.200 .6"/>`, 10, 10)}
        ${ic(svg`<path d="M1 3l3-1q2 2 4 0l3 1-1 3-1-.5V11H3V5.500L2 6z" fill="#8a5ce6"/><circle cx="10" cy="2" r="2" fill="#f0506a"/>`, 10, 10)}
        ${ic(svg`<path d="M1 1h4v4H1zM7 1h4v4H7zM1 7h4v4H1zM7 7h4v4H7z" fill="#1668d8"/>`, 9, 9)}
        ${ic(svg`<path d="M0 5q5-4 11-1l-3 2 1 3-6-1z" fill="#d8551c"/><circle cx="9" cy="6" r="1.500" fill="#222"/>`, 10, 10)}
      </div>`;
  }
}
